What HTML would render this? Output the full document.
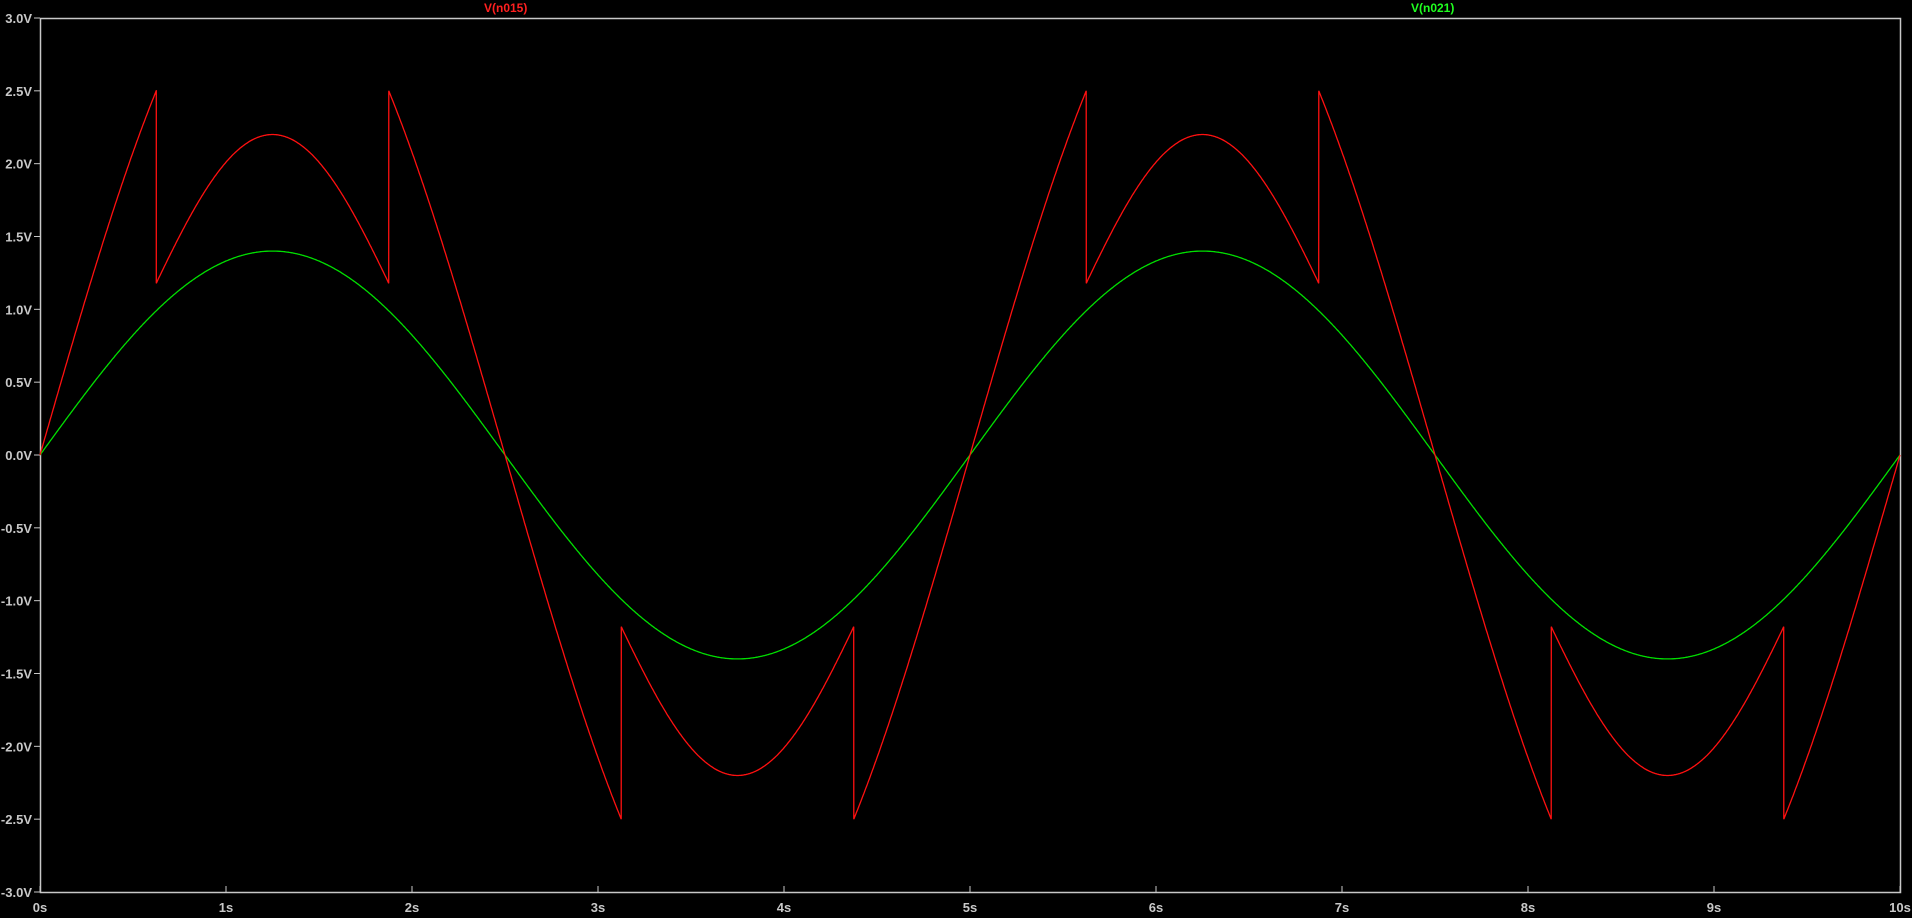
<!DOCTYPE html>
<html><head><style>
html,body{margin:0;padding:0;background:#000;width:1912px;height:918px;overflow:hidden}
svg text{font-family:"Liberation Sans",sans-serif;font-weight:bold;font-size:13px;fill:#c8c8c8}
</style></head><body>
<svg id="s" width="1912" height="918" xmlns="http://www.w3.org/2000/svg">
<rect x="40.5" y="18.5" width="1860" height="874" fill="none" stroke="#c8c8c8" stroke-width="1.5"/>
<g id="ax"></g>
<text x="484" y="12" style="fill:#ff2020;font-size:12px">V(n015)</text>
<text x="1411" y="12" style="fill:#20ff20;font-size:12px">V(n021)</text>
<path id="g" fill="none" stroke="#00e000" stroke-width="1.3"/>
<path id="r" fill="none" stroke="#ff1010" stroke-width="1.3"/>
</svg>
<script>
var X=t=>40+t*186, Y=v=>455-v*145.67, ax=document.getElementById('ax'), h='';
var labs=['3.0V','2.5V','2.0V','1.5V','1.0V','0.5V','0.0V','-0.5V','-1.0V','-1.5V','-2.0V','-2.5V','-3.0V'];
for(var i=0;i<13;i++){var y=18+i*874/12;h+='<line x1="34" x2="40" y1="'+y+'" y2="'+y+'" stroke="#c8c8c8"/>';h+='<text x="32" y="'+(y+5)+'" text-anchor="end">'+labs[i]+'</text>';}
for(var k=0;k<=10;k++){var x=X(k);h+='<line x1="'+x+'" x2="'+x+'" y1="886" y2="892" stroke="#c8c8c8"/>';h+='<text x="'+x+'" y="912" text-anchor="middle">'+k+'s</text>';}
ax.innerHTML=h;
var g='',r='';
for(var t=0;t<=10.0001;t+=0.005){g+=(t?'L':'M')+X(t).toFixed(1)+' '+Y(1.4*Math.sin(2*Math.PI*t/5)).toFixed(1);}
function red(t){var p=((t%5)+5)%5;var s=p<2.5?1:-1;var q=p%2.5;var sn=Math.sin(Math.PI*q/2.5);
 if(q>0.625&&q<1.875){return s*2.2*Math.pow(sn,1.8);}
 return s*3.5355*sn;}
var pts=[];for(var t=0;t<=10.0001;t+=0.005)pts.push(t);
[0.625,1.875,3.125,4.375,5.625,6.875,8.125,9.375].forEach(function(b){pts.push(b-1e-6,b+1e-6);});
pts.sort((a,b)=>a-b);
pts.forEach(function(t,i){r+=(i?'L':'M')+X(t).toFixed(1)+' '+Y(red(t)).toFixed(1);});
document.getElementById('g').setAttribute('d',g);document.getElementById('r').setAttribute('d',r);
</script>
</body></html>
